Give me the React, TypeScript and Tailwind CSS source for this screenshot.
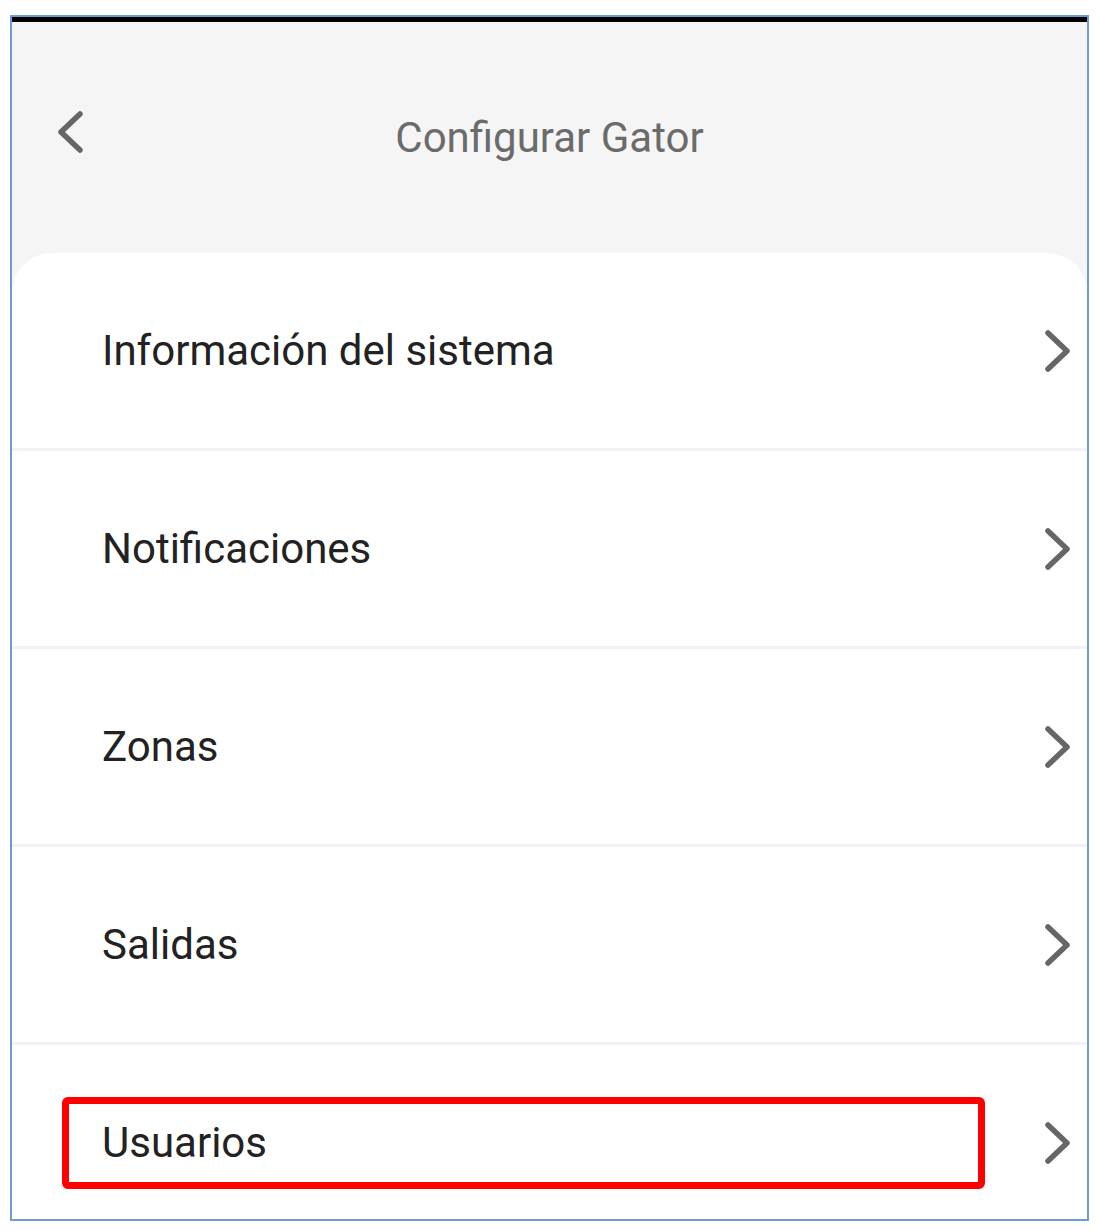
import React from 'react'

const items = ['Información del sistema', 'Notificaciones', 'Zonas', 'Salidas', 'Usuarios']

function Chevron({ dir }: { dir: 'left' | 'right' }) {
  const d = dir === 'left' ? 'M24 4 L5 22 L24 40' : 'M4 4 L23 22 L4 40'
  return (
    <svg width="28" height="44" viewBox="0 0 28 44" fill="none">
      <path d={d} stroke="#666666" strokeWidth="5.5" strokeLinecap="round" strokeLinejoin="round" />
    </svg>
  )
}

function App() {
  return (
    <div className="w-[1100px] h-[1231px] bg-white pt-[15px] pl-[10px] font-['Roboto',sans-serif]">
      <div className="w-[1079px] h-[1206px] border-2 border-[#6f9cd0] flex flex-col overflow-hidden bg-[#f5f5f5]">
        <div className="h-[5px] bg-black shrink-0" />

        {/* header */}
        <div className="h-[231px] shrink-0 relative flex items-center justify-center">
          <button className="absolute left-[44px] top-[88px]">
            <Chevron dir="left" />
          </button>
          <h1 className="text-[42px] text-[#6b6b6b] leading-none">Configurar Gator</h1>
        </div>

        {/* list card */}
        <div className="flex-1 bg-white rounded-t-[40px] overflow-hidden">
          {items.map((label, i) => (
            <div key={label}>
              {i > 0 && <div className="h-[3px] bg-[#f2f2f2]" />}
              <div className="h-[195px] relative flex items-center justify-between pl-[90px] pr-[15px]">
                <span className="text-[42px] text-[#222222] leading-none">{label}</span>
                <Chevron dir="right" />
                {label === 'Usuarios' && (
                  <div className="absolute left-[50px] top-[52px] w-[923px] h-[92px] border-[7px] border-[#ff0000] rounded-[6px]" />
                )}
              </div>
            </div>
          ))}
        </div>
      </div>
    </div>
  )
}

export default App
